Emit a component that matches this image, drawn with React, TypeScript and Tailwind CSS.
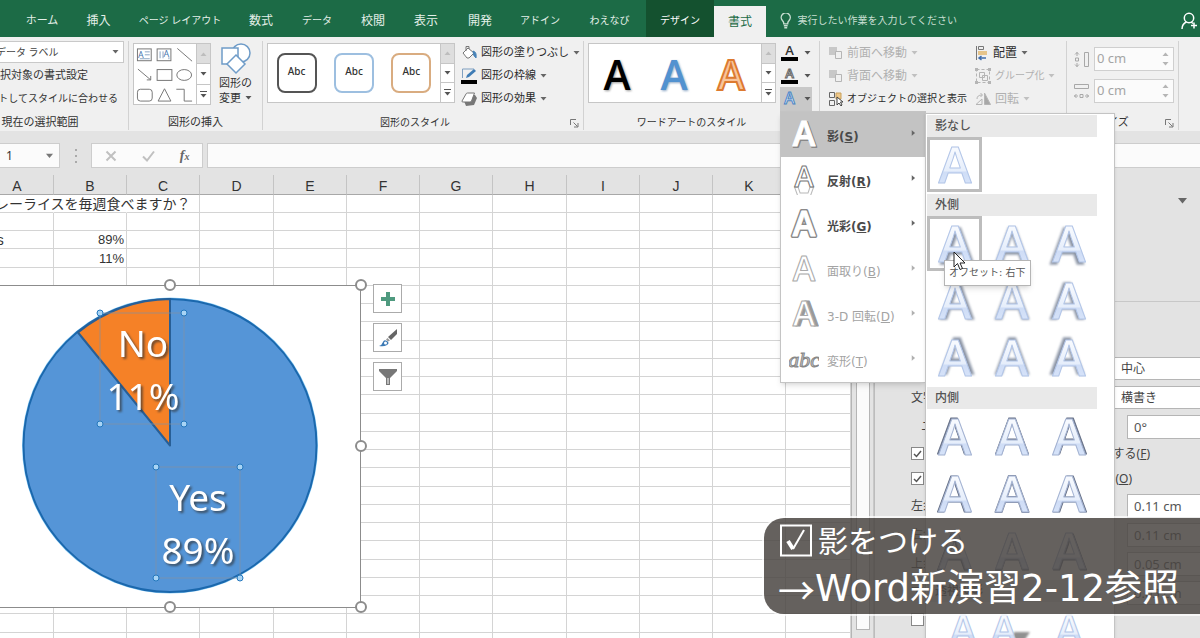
import { useState } from 'react';
import type { ReactNode } from 'react';
import clsx from 'clsx';

interface Tab {
  label: string;
  width: string;
  kind?: 'context' | 'active';
}

const TABS: Tab[] = [
  { label: 'ホーム', width: 'w-[60px] text-[11px]' },
  { label: '挿入', width: 'w-[53px] text-xs' },
  { label: 'ページ レイアウト', width: 'w-[110px] text-[10px]' },
  { label: '数式', width: 'w-[52px] text-xs' },
  { label: 'データ', width: 'w-[60px] text-[10px]' },
  { label: '校閲', width: 'w-[52px] text-xs' },
  { label: '表示', width: 'w-[54px] text-xs' },
  { label: '開発', width: 'w-[54px] text-xs' },
  { label: 'アドイン', width: 'w-[66px] text-[10px]' },
  { label: 'わえなび', width: 'w-[73px] text-[10px]' },
  { label: 'デザイン', width: 'w-[68px] text-[10px]', kind: 'context' },
  { label: '書式', width: 'w-[52px] text-xs', kind: 'active' },
];

const COLUMNS = ['A', 'B', 'C', 'D', 'E', 'F', 'G', 'H', 'I', 'J', 'K', ''];

const CELLS: Record<string, string> = {
  '0-A': 'カレーライスを毎週食べますか？',
  '2-A': 'Yes',
  '2-B': '89%',
  '3-A': 'No',
  '3-B': '11%',
};

function Caret({ className = 'text-[#555]' }: { className?: string }) {
  return (
    <svg width="7" height="4" viewBox="0 0 7 4" className={clsx('shrink-0', className)} aria-hidden>
      <path d="M0.5 0h6L3.5 3.6z" fill="currentColor" />
    </svg>
  );
}

/* ---------- Ribbon ---------- */

function Group({ label, className, launcher, labelClass = 'text-[11px]', children }: { label: string; className: string; launcher?: boolean; labelClass?: string; children: ReactNode }) {
  return (
    <section className={clsx('relative mt-1 mb-px flex shrink-0 flex-col border-r border-[#d2d2d2]', className)}>
      <div className="flex flex-1 items-start">{children}</div>
      <div className={clsx('h-4 text-center leading-4 text-[#333]', labelClass)}>{label}</div>
      {launcher && (
        <button aria-label={`${label}の詳細`} className="absolute right-1 bottom-0.5">
          <svg width="9" height="9" viewBox="0 0 9 9" fill="none" stroke="#777">
            <path d="M0.5 6V0.5H6M3.5 3.5l4 4M8 4v4H4" />
          </svg>
        </button>
      )}
    </section>
  );
}

function GalleryScroll() {
  return (
    <div className="flex w-3.5 flex-col border-l border-[#c6c6c6]">
      <button aria-label="上へ" className="flex flex-1 items-center justify-center bg-[#dedede]">
        <Caret className="rotate-180 text-[#bdbdbd]" />
      </button>
      <button aria-label="下へ" className="flex flex-1 items-center justify-center border-y border-[#c6c6c6]">
        <Caret />
      </button>
      <button aria-label="その他" className="flex flex-1 flex-col items-center justify-center gap-0.5">
        <span className="h-px w-[7px] bg-[#555]" />
        <Caret />
      </button>
    </div>
  );
}

function RibbonButton({ icon, label, disabled, caret = true, className = 'text-[11px]' }: { icon: ReactNode; label: string; disabled?: boolean; caret?: boolean; className?: string }) {
  return (
    <button disabled={disabled} className={clsx('flex h-[23px] items-center gap-1 whitespace-nowrap', disabled ? 'text-[#b0b0b0]' : 'text-[#2b2b2b]', className)}>
      {icon}
      <span>{label}</span>
      {caret && <Caret className={disabled ? 'text-[#c0c0c0]' : 'text-[#666]'} />}
    </button>
  );
}

function ShapeGallery() {
  return (
    <div className="mt-0.5 ml-1 flex h-[62px] w-[78px] border border-[#c6c6c6] bg-white">
      <svg viewBox="0 0 63 60" className="flex-1" fill="none" stroke="#777">
        <rect x="3.5" y="4.5" width="14" height="12" />
        <text x="4" y="14" fontSize="9" fill="#4a78b0" stroke="none" fontFamily="Noto Sans">A</text>
        <path d="M11 7.5h5M11 10.5h5M6 14.5h10" stroke="#8aa5c5" />
        <rect x="23.5" y="4.5" width="14" height="12" />
        <path d="M26.5 7v7M29.5 7v7M35.5 13v2" stroke="#8aa5c5" />
        <text x="30" y="13" fontSize="9" fill="#4a78b0" stroke="none" fontFamily="Noto Sans">A</text>
        <path d="M44 4l15 13M4 25l13 11M17 32v4h-4" />
        <rect x="23.5" y="25.5" width="15" height="11" />
        <ellipse cx="51" cy="31" rx="7.5" ry="5.5" />
        <rect x="3.5" y="45.5" width="15" height="12" rx="3" />
        <path d="M31 45l-6.5 12.5h13zM43 45.5h8v12h8" />
      </svg>
      <GalleryScroll />
    </div>
  );
}

function BucketIcon() {
  return (
    <svg width="16" height="16" viewBox="0 0 16 16" fill="none" stroke="#777">
      <path d="M2 8l5-5 6 5-5 5H6z" fill="#fff" />
      <path d="M5 6V1.500h3V4" />
      <path d="M12 6q4 1 3 7q-3-2-3-7z" fill="#4a84b8" stroke="#4a84b8" />
    </svg>
  );
}

function OutlineIcon() {
  return (
    <svg width="16" height="16" viewBox="0 0 16 16" fill="none">
      <path d="M13 1H1.500v9" stroke="#7f9fc0" />
      <path d="M5 10l1-3 7-6 2 2-7 6z" fill="#3f7cb5" />
      <rect y="12" width="16" height="4" fill="#000" />
    </svg>
  );
}

function EffectIcon() {
  return (
    <svg width="16" height="16" viewBox="0 0 16 16">
      <path d="M3 10L6 4h8l2 3-3 7-8 1z" fill="#777" />
      <path d="M1 10l4-7q.4-1 1.500-1h7l-3 8q-.5 1-1.500 1H2q-1.400 0-1-1z" fill="#fff" stroke="#777" />
    </svg>
  );
}

function StackIcon() {
  return (
    <svg width="15" height="14" viewBox="0 0 15 14">
      <path d="M1 1h8v8H1z" fill="#c8c8c8" />
      <path d="M7.500 5.500h6v7h-6z" fill="#f0f0f0" stroke="#b5b5b5" />
    </svg>
  );
}

function SelectionIcon() {
  return (
    <svg width="15" height="16" viewBox="0 0 15 16" fill="none" stroke="#666">
      <path d="M1.500 1.500h5v5h-5zM1.500 9.500h5v5h-5z" />
      <path d="M8 2h5v6H8z" fill="#f0c98a" stroke="#c9a05a" />
      <path d="M9 6v8l2-2 2 3 1-1-1.500-3H15z" fill="#fff" stroke="#444" />
    </svg>
  );
}

function AlignIcon() {
  return (
    <svg width="14" height="16" viewBox="0 0 14 16" fill="none">
      <path d="M1.500 1v14" stroke="#777" />
      <path d="M3.500 1.500h5v3h-5z" stroke="#777" />
      <path d="M3 6h9v4H3z" fill="#e6c48a" />
      <path d="M11 13H4M6.500 11L4 13l2.500 2" stroke="#3f6cab" strokeWidth="1.500" />
    </svg>
  );
}

function GroupIcon() {
  return (
    <svg width="16" height="16" viewBox="0 0 16 16" fill="none" stroke="#b5b5b5">
      <path d="M1.500 1.500h13v13h-13z" strokeDasharray="3 2" />
      <path d="M4.500 4.500h5v5h-5zM7.500 7.500h5v5h-5z" />
      <path d="M0 0h3v3H0zM13 0h3v3h-3zM0 13h3v3H0zM13 13h3v3h-3z" fill="#b5b5b5" stroke="none" />
    </svg>
  );
}

function RotateIcon() {
  return (
    <svg width="16" height="14" viewBox="0 0 16 14" fill="none" stroke="#b5b5b5">
      <path d="M1 12.500h6V7z M2 7q0-4 5-4M5.500 1l2 2-2 2" />
      <path d="M9.500 1v11.500h6z" fill="#a8a8a8" />
    </svg>
  );
}

function HeightIcon() {
  return (
    <svg width="17" height="17" viewBox="0 0 17 17" fill="none" stroke="#a8a8a8">
      <path d="M11.500 1.500h4v14h-4z" />
      <path d="M4 1v4M2 3.500l2-2 2 2M4 12v4M2 13.500l2 2 2-2M2.500 7h3v3h-3z" />
    </svg>
  );
}

function WidthIcon() {
  return (
    <svg width="17" height="17" viewBox="0 0 17 17" fill="none" stroke="#a8a8a8">
      <path d="M1.500 1.500h14v4h-14z" />
      <path d="M1 13h4M3.500 11l-2 2 2 2M12 13h4M13.500 11l2 2-2 2M7 11.500h3v3H7z" />
    </svg>
  );
}

function SmallA({ fill, stroke, bar }: { fill: string; stroke: string; bar?: boolean }) {
  return (
    <svg width="17" height="16" viewBox="0 0 17 16">
      <text x="8.500" y={bar ? 10 : 13} textAnchor="middle" fontSize={bar ? 13 : 16} fontWeight="600" fontFamily="Open Sans" fill={fill} stroke={stroke} strokeWidth="1">A</text>
      {bar && <rect y="12" width="17" height="4" fill="#000" />}
    </svg>
  );
}

/* ---------- Text effect menus ---------- */

const EFFECTS = [
  { label: '影', accessKey: 'S', style: 'shadow' },
  { label: '反射', accessKey: 'R', style: 'reflect' },
  { label: '光彩', accessKey: 'G', style: 'glow' },
  { label: '面取り', accessKey: 'B', style: 'bevel', disabled: true },
  { label: '3-D 回転', accessKey: 'D', style: 'rotate', disabled: true },
  { label: '変形', accessKey: 'T', style: 'warp', disabled: true },
];

function EffectGlyph({ style }: { style: string }) {
  if (style === 'warp') {
    return (
      <svg width="30" height="30" viewBox="0 0 30 30">
        <text x="15" y="22" textAnchor="middle" fontSize="22" fontStyle="italic" fontFamily="Liberation Serif" fill="#ccc" stroke="#888">abc</text>
      </svg>
    );
  }
  const dim = style === 'bevel' || style === 'rotate';
  return (
    <svg width="30" height="36" viewBox="0 0 30 36" fontFamily="Open Sans" fontWeight="600" fontSize={style === 'reflect' ? 29 : 34} textAnchor="middle" strokeLinejoin="round">
      {style === 'rotate' && <text x="18" y="29" fill="#999" stroke="#999">A</text>}
      {style === 'shadow' && <text x="16" y="30" fill="#808080" stroke="#888" strokeWidth="2">A</text>}
      {style === 'glow' && <text x="15" y="29" fill="#888" stroke="#8a8a8a" strokeWidth="4">A</text>}
      {style === 'reflect' && (
        <g opacity="0.5" transform="matrix(1 0 0 -1 0 50)">
          <text x="15" y="25" fill="#fff" stroke="#777">A</text>
          <path d="M0 0h30v17H0z" fill="#fff" />
        </g>
      )}
      <text x="15" y={style === 'reflect' ? 25 : 29} fill="#fff" stroke={dim ? '#aaa' : style === 'reflect' ? '#777' : '#fff'}>A</text>
    </svg>
  );
}

type Shade = 'none' | 'outer' | 'inner' | 'perspective';

// dx / dy give the side on which the shade falls
function ShadeSwatch({ shade, dx = 0, dy = 0, selected, label }: { shade: Shade; dx?: number; dy?: number; selected?: boolean; label: string }) {
  const x = shade === 'perspective' ? 24 - dx * 8 : 24;
  return (
    <button aria-label={label} className={clsx('flex size-[55px] items-center justify-center border-[3px]', selected ? 'border-[#bdbdbd]' : 'border-transparent')}>
      <svg width="48" height="48" viewBox="0 0 48 48" fontFamily="Open Sans" fontWeight="600" fontSize={shade === 'perspective' ? 40 : 50} textAnchor="middle" strokeLinejoin="round">
        <defs>
          <linearGradient id="face" x1="0" y1="0" x2="0" y2="1">
            <stop offset="0.3" stopColor="#f6f9fe" />
            <stop offset="0.6" stopColor="#e6eefb" />
            <stop offset="0.62" stopColor="#cfddf6" />
            <stop offset="0.85" stopColor="#d9e5fa" />
          </linearGradient>
        </defs>
        {shade === 'outer' && <text x={24 + dx * 2} y={42 + dy * 2} fill="#828b9c" stroke="#a4acba" strokeWidth="2" className="blur-[1px]">A</text>}
        {shade === 'inner' && <text x={24 + dx} y={42 + dy} fill="#6a748a" stroke={dx || dy ? '#6a748a' : '#78829a'} strokeWidth={dx || dy ? 1 : 2}>A</text>}
        {shade === 'perspective' && <path d={dx > 0 ? 'M26 26h16l-8 12H22z' : 'M2 34h18l-4 8H6z'} fill="#909090" className="blur-[1px]" />}
        <text x={x} y={shade === 'perspective' ? 38 : 42} fill="url(#face)" stroke={shade === 'inner' ? '#a5b4d3' : '#b3c6e8'}>A</text>
      </svg>
    </button>
  );
}

const OUTER = [
  [1, 1, '右下'], [0, 1, '下'], [-1, 1, '左下'],
  [1, 0, '右'], [0, 0, '中央'], [-1, 0, '左'],
  [1, -1, '右上'], [0, -1, '上'], [-1, -1, '左上'],
] as const;

const INNER = [
  [-1, -1, '左上'], [0, -1, '上'], [1, -1, '右上'],
  [-1, 0, '左'], [0, 0, '中央'], [1, 0, '右'],
  [-1, 1, '左下'], [0, 1, '下'], [1, 1, '右下'],
] as const;

function ShadeSection({ title, children }: { title: string; children: ReactNode }) {
  return (
    <section>
      <h3 className="h-[22px] w-[170px] bg-[#e9e9e9] pl-2 text-xs leading-[22px] font-medium text-[#555]">{title}</h3>
      <div className="grid w-[169px] grid-cols-3 gap-0.5 pb-0.5">{children}</div>
    </section>
  );
}

function ShadowMenu() {
  return (
    <div className="absolute top-px left-full w-[190px] border border-[#c4c4c4] bg-white pt-px pl-px shadow-sm">
      <ShadeSection title="影なし">
        <ShadeSwatch shade="none" label="影なし" selected />
      </ShadeSection>
      <ShadeSection title="外側">
        {OUTER.map(([dx, dy, name], i) => (
          <ShadeSwatch key={name} shade="outer" dx={dx} dy={dy} label={`オフセット: ${name}`} selected={i === 0} />
        ))}
      </ShadeSection>
      <ShadeSection title="内側">
        {INNER.map(([dx, dy, name]) => (
          <ShadeSwatch key={name} shade="inner" dx={dx} dy={dy} label={`内側: ${name}`} />
        ))}
      </ShadeSection>
      <ShadeSection title="透視投影">
        <ShadeSwatch shade="perspective" dx={-1} label="透視投影: 左上" />
        <ShadeSwatch shade="perspective" dx={1} label="透視投影: 右上" />
        <ShadeSwatch shade="perspective" label="透視投影: 下" />
      </ShadeSection>
      <div role="tooltip" className="absolute top-[146px] left-[18px] border border-[#b5b5b5] bg-white px-1 text-[10px] leading-6 whitespace-nowrap text-[#555] shadow-md">
        オフセット: 右下
      </div>
      <svg width="14" height="20" viewBox="0 0 14 20" className="absolute top-[137px] left-[27px]" aria-hidden>
        <path d="M1 1v15l3.500-3.500 2.500 6 2.500-1-2.500-5.500h5z" fill="#fff" stroke="#222" />
      </svg>
    </div>
  );
}

function EffectsMenu() {
  return (
    <div className="absolute top-full left-0 z-20 w-[146px] border border-[#c4c4c4] bg-white font-['DejaVu_Sans','Noto_Sans_CJK_JP',sans-serif] shadow-md">
      {EFFECTS.map((effect, i) => (
        <button
          key={effect.accessKey}
          disabled={effect.disabled}
          className={clsx('flex h-[45px] w-full items-center pr-2 pl-2 text-xs', i === 0 && 'bg-[#c3c3c3]', effect.disabled ? 'text-[#a3a3a3]' : 'font-bold text-[#4a4a4a]')}
        >
          <span className="flex w-[38px] items-center"><EffectGlyph style={effect.style} /></span>
          <span className="flex-1 pt-1 text-left whitespace-nowrap">{effect.label}(<u>{effect.accessKey}</u>)</span>
          <Caret className={clsx('mb-1 -rotate-90', effect.disabled ? 'text-[#b0b0b0]' : 'text-[#666]')} />
        </button>
      ))}
      <ShadowMenu />
    </div>
  );
}

function Ribbon() {
  const [open, setOpen] = useState(true);
  return (
    <div className="flex h-[94px] shrink-0 bg-[#f0f0f0]">
      <Group label="現在の選択範囲" labelClass="pr-12 text-[11px]" className="w-[129px]">
        <div className="flex w-full flex-col items-end">
          <div className="relative mr-1 flex h-[22px] w-[131px] items-center border border-[#c9c9c9] bg-white">
            <select aria-label="グラフの要素" className="w-full appearance-none pl-0.5 text-[10px] text-[#444]">
              <option>データ ラベル</option>
            </select>
            <Caret className="absolute right-1 text-[#666]" />
          </div>
          <button className="mt-px mr-10 h-[23px] text-[11px] whitespace-nowrap text-[#333]">選択対象の書式設定</button>
          <button className="mr-2.5 h-[23px] text-[10px] whitespace-nowrap text-[#333]">リセットしてスタイルに合わせる</button>
        </div>
      </Group>

      <Group label="図形の挿入" className="w-[134px]">
        <ShapeGallery />
        <button className="ml-2 flex flex-col items-center pt-0.5 text-[11px] leading-[15px] text-[#333]">
          <svg width="32" height="32" viewBox="0 0 32 32" fill="#fff" stroke="#6f9cc8" strokeWidth="1.500">
            <circle cx="21" cy="10" r="9" />
            <path d="M2 5h16v16H2z" />
            <path d="M16 12l9 9-9 9-9-9z" />
          </svg>
          <span>図形の</span>
          <span className="flex items-center gap-1">変更 <Caret /></span>
        </button>
      </Group>

      <Group label="図形のスタイル" launcher labelClass="pr-4 text-[10px]" className="w-[321px]">
        <div className="mt-0.5 ml-1 flex h-[60px] w-[188px] border border-[#c6c6c6] bg-white">
          <div className="flex flex-1 items-center justify-around text-[10px] font-medium text-[#333]">
            <button className="h-10 w-10 rounded-lg border-2 border-[#555] pb-1">Abc</button>
            <button className="h-10 w-10 rounded-lg border-2 border-[#9dbfe0] pb-1">Abc</button>
            <button className="h-10 w-10 rounded-lg border-2 border-[#d9ac80] pb-1">Abc</button>
          </div>
          <GalleryScroll />
        </div>
        <div className="ml-1.5">
          <RibbonButton icon={<BucketIcon />} label="図形の塗りつぶし" />
          <RibbonButton icon={<OutlineIcon />} label="図形の枠線" />
          <RibbonButton icon={<EffectIcon />} label="図形の効果" />
        </div>
      </Group>

      <Group label="ワードアートのスタイル" labelClass="pr-5 text-[10px]" className="w-[236px]">
        <div className="mt-0.5 ml-1 flex h-[60px] w-[188px] border border-[#c6c6c6] bg-white">
          <svg viewBox="0 0 172 58" className="flex-1" fontFamily="Open Sans" fontSize="41" fontWeight="600" textAnchor="middle">
            <text x="29" y="47" fill="#999" className="blur-[1px]">A</text>
            <text x="28" y="46" fill="#000">A</text>
            <text x="86" y="47" fill="#8fa9c6" className="blur-[1px]">A</text>
            <text x="85" y="46" fill="#5292d0">A</text>
            <text x="142" y="46" fill="#f8c49b" stroke="#dd7a30" strokeWidth="2">A</text>
          </svg>
          <GalleryScroll />
        </div>
        <div className="ml-1 flex flex-col">
          <button aria-label="文字の塗りつぶし" className="flex h-[23px] w-8 items-center justify-center gap-1.5"><SmallA fill="#333" stroke="none" bar /><Caret /></button>
          <button aria-label="文字の輪郭" className="flex h-[23px] w-8 items-center justify-center gap-1.5"><SmallA fill="#fff" stroke="#666" bar /><Caret /></button>
          <div className="relative">
            <button aria-label="文字の効果" aria-expanded={open} onClick={() => setOpen(!open)} className="flex h-6 w-8 items-center justify-center gap-1.5 bg-[#c8c8c8]">
              <SmallA fill="#e6f0fb" stroke="#4a84c4" />
              <Caret />
            </button>
            {open && <EffectsMenu />}
          </div>
        </div>
      </Group>

      <Group label="配置" className="w-[247px]">
        <div className="ml-2">
          <RibbonButton icon={<StackIcon />} label="前面へ移動" disabled className="text-xs" />
          <RibbonButton icon={<StackIcon />} label="背面へ移動" disabled className="text-xs" />
          <RibbonButton icon={<SelectionIcon />} label="オブジェクトの選択と表示" caret={false} className="text-[10px]" />
        </div>
        <div className="ml-2">
          <RibbonButton icon={<AlignIcon />} label="配置" className="text-xs" />
          <RibbonButton icon={<GroupIcon />} label="グループ化" disabled className="text-[10px]" />
          <RibbonButton icon={<RotateIcon />} label="回転" disabled className="text-xs" />
        </div>
      </Group>

      <Group label="サイズ" launcher labelClass="pr-5 text-[11px]" className="w-[112px]">
        <div className="mt-1.5 ml-1.5 flex flex-col gap-2">
          {['高さ', '幅'].map(name => (
            <label key={name} className="flex items-center gap-1">
              {name === '幅' ? <WidthIcon /> : <HeightIcon />}
              <span className="flex h-6 w-20 items-center border border-[#cfcfcf] bg-[#fbfbfb] pr-1">
                <input aria-label={name} defaultValue="0 cm" disabled className="w-full min-w-0 pl-0.5 text-[13px] text-[#a5a5a5]" />
                <span className="flex flex-col gap-1.5">
                  <Caret className="rotate-180 text-[#b5b5b5]" />
                  <Caret className="text-[#b5b5b5]" />
                </span>
              </span>
            </label>
          ))}
        </div>
      </Group>
    </div>
  );
}

/* ---------- Sheet and chart ---------- */

function FormulaBar() {
  return (
    <div className="flex h-11 shrink-0 pt-3">
      <div className="flex h-[25px] w-[60px] items-center border border-l-0 border-[#cdcdcd] bg-[#fbfbfb] pr-1.5">
        <input aria-label="名前ボックス" defaultValue="1" className="w-full min-w-0 pl-1.5 text-xs text-[#333]" />
        <Caret className="scale-125 text-[#777]" />
      </div>
      <div className="flex w-[31px] flex-col items-center justify-center gap-1 pb-1.5">
        <span className="size-0.5 bg-[#aaa]" />
        <span className="size-0.5 bg-[#aaa]" />
        <span className="size-0.5 bg-[#aaa]" />
      </div>
      <div className="flex h-[25px] w-28 items-center justify-around border border-[#cdcdcd] bg-[#fbfbfb]">
        <button aria-label="キャンセル">
          <svg width="12" height="12" viewBox="0 0 12 12" stroke="#c0c0c0" strokeWidth="2"><path d="M1.500 1.500l9 9M10.500 1.500l-9 9" /></svg>
        </button>
        <button aria-label="入力">
          <svg width="13" height="12" viewBox="0 0 13 12" stroke="#c0c0c0" strokeWidth="2" fill="none"><path d="M1 6.500l4 4 7-9" /></svg>
        </button>
        <button aria-label="関数の挿入" className="font-['Liberation_Serif',serif] text-sm font-bold text-[#666] italic">f<span className="text-[10px]">x</span></button>
      </div>
      <input aria-label="数式バー" className="ml-1 h-[25px] flex-1 border border-r-0 border-[#cdcdcd] bg-[#fbfbfb]" />
    </div>
  );
}

function Knob({ x, y }: { x: number; y: number }) {
  return <circle cx={x} cy={y} r="5" fill="#fff" stroke="#8c8c8c" strokeWidth="2" />;
}

function LabelFrame({ x, y }: { x: number; y: number }) {
  const corners = [[x, y], [x + 84, y], [x, y + 111], [x + 84, y + 111]];
  return (
    <g>
      <rect x={x} y={y} width="84" height="111" fill="none" stroke="#8593a3" strokeOpacity="0.7" />
      {corners.map(([cx, cy]) => (
        <circle key={`${cx}-${cy}`} cx={cx} cy={cy} r="3" fill="#a8d4f5" stroke="#2377bd" />
      ))}
    </g>
  );
}

function PieChart() {
  return (
    <svg width="368" height="336" viewBox="0 0 368 336" className="absolute top-[103px] left-0">
      <path d="M-2 7.500H360.500V329.500H-2z" fill="#fff" stroke="#8c8c8c" />
      <circle cx="170" cy="167.500" r="148" fill="#8fd0f8" />
      <circle cx="170" cy="167.500" r="146.500" fill="#5595d7" stroke="#1b68ad" strokeWidth="2" />
      <path d="M170 167.500V21A146.500 146.500 0 0 0 78 54.500z" fill="#f58127" stroke="#285f96" strokeWidth="2" strokeLinejoin="round" />
      <LabelFrame x={100} y={35} />
      <LabelFrame x={156} y={189} />
      <g fontFamily="Noto Sans" fontSize="37" textAnchor="middle" className="fill-white drop-shadow-[2px_2px_1px_rgba(50,50,50,0.7)]">
        <text x="143" y="79">No</text>
        <text x="143" y="132">11%</text>
        <text x="198" y="233">Yes</text>
        <text x="198" y="286">89%</text>
      </g>
      <Knob x={170} y={7} />
      <Knob x={361} y={7} />
      <Knob x={361} y={168} />
      <Knob x={170} y={329} />
      <Knob x={361} y={329} />
    </svg>
  );
}

function ChartTools() {
  return (
    <div className="absolute top-[109px] left-[373px] flex flex-col gap-2.5">
      <button aria-label="グラフ要素" className="flex size-[29px] items-center justify-center border border-[#ababab] bg-white">
        <svg width="16" height="16" viewBox="0 0 16 16"><path d="M6 1h4v5h5v4h-5v5H6v-5H1V6h5z" fill="#4f9a7f" /></svg>
      </button>
      <button aria-label="グラフ スタイル" className="flex size-[29px] items-center justify-center border border-[#ababab] bg-white">
        <svg width="20" height="20" viewBox="0 0 20 20">
          <path d="M19 1v5l-6 6-3-3z" fill="#666" />
          <path d="M9.500 10l2.500 2.500-2 1-2-2z" fill="#999" />
          <path d="M1 18q3-1 4-4t4-1q3 2 0 4-3 2-8 1z" fill="#3a78b4" />
          <circle cx="7.500" cy="15" r="1.500" fill="#fff" />
        </svg>
      </button>
      <button aria-label="グラフ フィルター" className="flex size-[29px] items-center justify-center border border-[#ababab] bg-white">
        <svg width="20" height="18" viewBox="0 0 20 18"><path d="M1 1h18v2l-7 7v7H8v-7L1 3z" fill="#777" /><path d="M10 10v6" stroke="#fff" /></svg>
      </button>
    </div>
  );
}

function columnWidth(name: string) {
  if (name === '') return undefined;
  return name === 'D' || name === 'H' ? 'w-[74px]' : 'w-[73px]';
}

function Sheet() {
  return (
    <div className="relative min-w-0 flex-1 overflow-hidden border-r border-[#b5b5b5]">
      <table className="-ml-[19px] w-[calc(100%+19px)] table-fixed border-separate border-spacing-0 bg-white font-['Liberation_Sans','Noto_Sans_CJK_JP',sans-serif] text-[13px] leading-4 text-[#333]">
        <thead>
          <tr className="h-5 bg-[#e3e3e3]">
            {COLUMNS.map((c, i) => (
              <th key={i} scope="col" className={clsx('border-r border-b border-r-[#c4c4c4] border-b-[#a8a8a8] p-0 pt-0.5 text-sm leading-4 font-normal', columnWidth(c))}>{c}</th>
            ))}
          </tr>
        </thead>
        <tbody>
          {Array.from({ length: 25 }, (_, r) => (
            <tr key={r} className={r % 4 === 3 ? 'h-[19px]' : 'h-[18px]'}>
              {COLUMNS.map((c, i) => {
                const spill = r === 0 && i < 2;
                return (
                  <td
                    key={i}
                    className={clsx(
                      'border-r border-b border-b-[#d4d4d4] p-0 align-bottom',
                      spill ? 'border-r-transparent' : 'border-r-[#d4d4d4]',
                      c === 'A' && 'text-sm leading-4',
                      c === 'B' ? 'pt-px pr-0.5 text-right' : 'whitespace-nowrap'
                    )}
                  >
                    {CELLS[`${r}-${c}`]}
                  </td>
                );
              })}
            </tr>
          ))}
        </tbody>
      </table>
      <PieChart />
      <ChartTools />
    </div>
  );
}

/* ---------- Format pane ---------- */

function Measure({ label, value, indent = 'pl-10' }: { label: string; value: string; indent?: string }) {
  return (
    <label className={clsx('flex h-[29px] items-center', indent)}>
      <span className="flex-1 whitespace-nowrap">{label}</span>
      <input defaultValue={value} className="h-6 w-[73px] border border-r-0 border-[#b5b5b5] bg-white pl-1.5 text-[13px] text-[#555]" />
    </label>
  );
}

function Choice({ label, value }: { label: string; value: string }) {
  return (
    <label className="flex h-[29px] items-center pl-10">
      <span className="flex-1 whitespace-nowrap">{label}</span>
      <select className="h-[23px] w-[86px] appearance-none border border-r-0 border-[#b5b5b5] bg-white pl-1.5 text-xs text-[#444]">
        <option>{value}</option>
      </select>
    </label>
  );
}

function Check({ label, accessKey, width, checked = true }: { label: string; accessKey: string; width: string; checked?: boolean }) {
  const [on, setOn] = useState(checked);
  return (
    <label className="flex h-[25px] items-center pl-10">
      <span className="relative flex size-[13px] items-center justify-center">
        <input type="checkbox" checked={on} onChange={() => setOn(!on)} className="size-[13px] appearance-none border border-[#888] bg-white" />
        {on && (
          <svg width="9" height="8" viewBox="0 0 9 8" className="pointer-events-none absolute" fill="none" stroke="#555" strokeWidth="1.500"><path d="M1 4l2.500 2.500L8 1" /></svg>
        )}
      </span>
      <span className={clsx('text-right whitespace-nowrap', width)}>{label}(<u>{accessKey}</u>)</span>
    </label>
  );
}

function FormatPane() {
  return (
    <aside className="flex w-[326px] shrink-0 flex-col border-l border-[#bcbcbc] text-xs text-[#444]">
      <div className="flex h-[127px] shrink-0 justify-end border-b border-[#c8c8c8] pt-[22px] pr-3.5">
        <button aria-label="作業ウィンドウのオプション" className="h-2"><Caret className="scale-150 text-[#666]" /></button>
      </div>
      <div className="-ml-1 pt-[52px]">
        <Choice label="垂直方向の配置" value="中心" />
        <Choice label="文字列の方向" value="横書き" />
        <Measure label="ユーザー設定の角度" value="0°" indent="pl-[50px]" />
        <Check label="図形のサイズを調整する" accessKey="F" width="w-[226px]" />
        <Check label="はみ出して表示する" accessKey="O" width="w-[208px]" />
        <Measure label="左余白" value="0.11 cm" />
        <Measure label="右余白" value="0.11 cm" />
        <Measure label="上余白" value="0.05 cm" />
        <Measure label="下余白" value="0.05 cm" />
        <Check label="図形内で折り返す" accessKey="W" width="w-[180px]" checked={false} />
      </div>
    </aside>
  );
}

export default function App() {
  return (
    <div className="relative flex h-screen flex-col overflow-hidden bg-[#e3e3e3] font-['Noto_Sans','Noto_Sans_CJK_JP',sans-serif]">
      <nav className="flex h-[37px] shrink-0 items-stretch bg-[#1c6b46] pl-3 text-white">
        {TABS.map(tab => (
          <button
            key={tab.label}
            className={clsx(
              'shrink-0 pt-1 whitespace-nowrap',
              tab.width,
              tab.kind === 'context' && 'bg-[#14512f]',
              tab.kind === 'active' && 'mt-1.5 bg-[#f0f0f0] pb-1 text-[#1c6b46]',
              !tab.kind && 'text-[#e4f0e9]'
            )}
          >
            {tab.label}
          </button>
        ))}
        <label className="ml-3.5 flex flex-1 items-center gap-1.5 pt-1 text-[#c8dfd2]">
          <svg width="12" height="16" viewBox="0 0 12 16" fill="none" stroke="currentColor" strokeWidth="1.500">
            <path d="M4 11q0-2-1.500-3.500a4.700 4.700 0 1 1 7 0Q8 9 8 11zM4 13h4M4.500 15h3" />
          </svg>
          <input aria-label="操作アシスト" placeholder="実行したい作業を入力してください" className="w-full text-[10px] placeholder:text-[#c8dfd2]" />
        </label>
        <button aria-label="共有" className="pt-1 pr-0.5">
          <svg width="17" height="18" viewBox="0 0 17 18" fill="none" stroke="currentColor" strokeWidth="1.500">
            <circle cx="8" cy="6" r="4.700" />
            <path d="M1 17q0-5 4.500-7M10 10l2 1.500M13 10.500v6M10 13.500h6" />
          </svg>
        </button>
      </nav>

      <Ribbon />
      <FormulaBar />

      <main className="flex min-h-0 flex-1">
        <Sheet />
        <div className="flex w-[22px] shrink-0 border-r border-[#c8c8c8] pb-2 pl-1">
          <div className="w-3.5 border border-[#b5b5b5] bg-[#fbfbfb]" />
        </div>
        <FormatPane />
      </main>

      {/* Caption */}
      <div className="absolute right-0 bottom-6 z-30 h-24 w-[436px] rounded-l-[20px] bg-[#4a4542]/85 pl-3.5 text-white ring-2 ring-white/70">
        <p className="flex h-[46px] items-center gap-1 text-[30px] leading-[46px]">
          <svg width="36" height="34" viewBox="0 0 36 34" fill="none" stroke="currentColor" aria-hidden>
            <path d="M3 1.500h30v30H3z" strokeWidth="2" />
            <path d="M10 17l5 8" strokeWidth="4" />
            <path d="M15 25L26 6" strokeWidth="2" />
          </svg>
          影をつける
        </p>
        <p className="flex h-[50px] font-['DejaVu_Sans','Noto_Sans_CJK_JP',sans-serif] text-[37px] leading-[50px] whitespace-nowrap">
          <span className="font-['Noto_Sans_CJK_JP',sans-serif]">→</span>Word新演習2-12参照
        </p>
      </div>
    </div>
  );
}
